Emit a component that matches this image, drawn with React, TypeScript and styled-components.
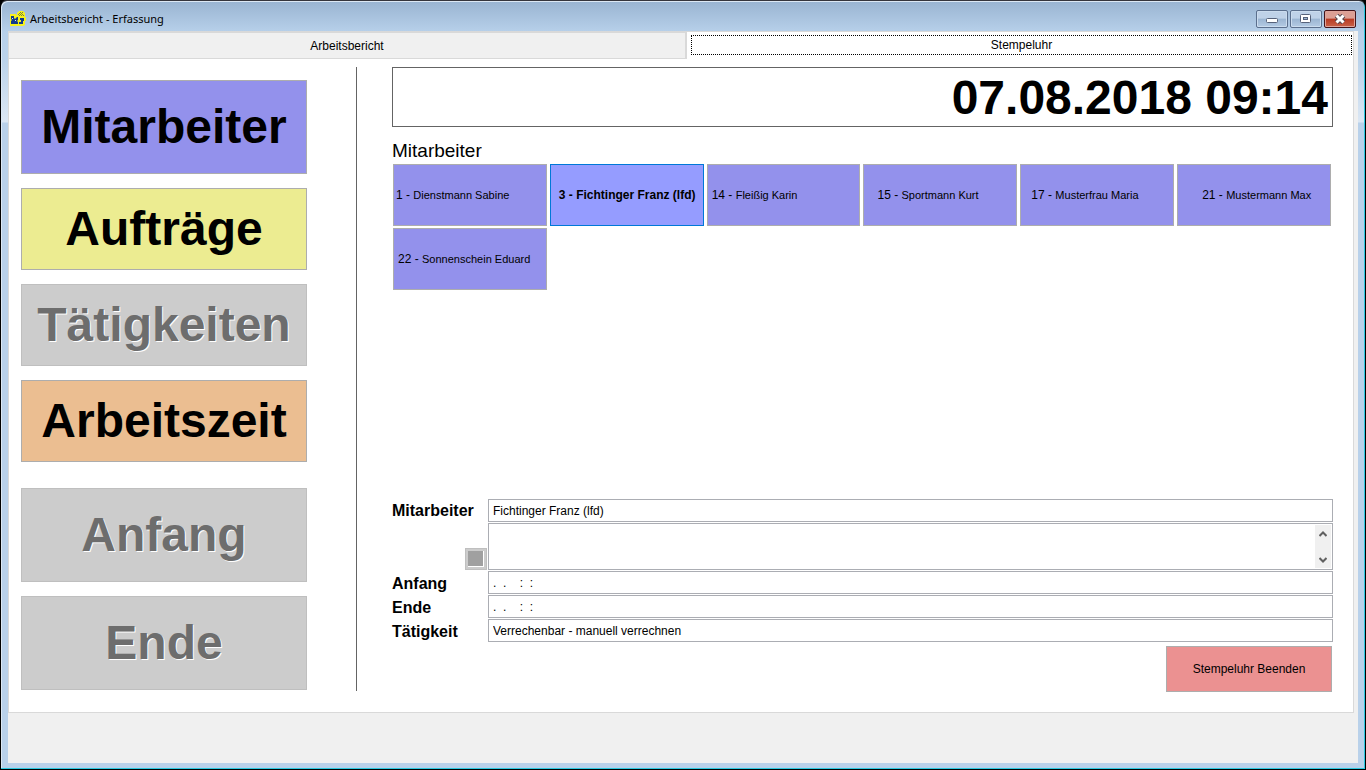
import React, { useState } from 'react';
import styled, { createGlobalStyle, css } from 'styled-components';

const GlobalStyle = createGlobalStyle`
  * { box-sizing: border-box; }
  body { margin: 0; background: #000; }
  #root { min-height: 100vh; display: flex; }
  body, button, input, textarea, label {
    font-family: "Liberation Sans", Arial, sans-serif;
    font-size: 12px;
    color: #000;
  }
`;

const Frame = styled.div`
  flex: 1;
  min-width: 0;
  display: flex;
  flex-direction: column;
  padding: 0 6px 6px;
  background: linear-gradient(#99b4d1 0, #b7d0ea 31px, #bcd3ea 60px, #dbe7f4 121px, #b9d1ea 122px);
  border: 1px solid #000;
  border-left-color: #000;
  border-top-color: #35353c;
  border-radius: 7px 7px 0 0;
  box-shadow: inset -1px -1px 0 #2cc8e0, inset 1px 1px 0 #dce8f4;
`;

const TitleBar = styled.header`
  height: 30px;
  display: flex;
  align-items: center;
  padding: 6px 3px 0 3px;
  gap: 4px;
`;

const Title = styled.h1`
  flex: 1;
  margin: 0;
  font: 400 11px/16px "Noto Sans", "Open Sans", sans-serif;
`;

const WindowButtons = styled.div`
  display: flex;
  gap: 2px;
`;

const WindowButton = styled.button<{ $close?: boolean }>`
  width: 32px;
  height: 18px;
  padding: 0;
  display: flex;
  align-items: center;
  justify-content: center;
  border: 1px solid ${p => (p.$close ? '#43141a' : '#5b6f8d')};
  border-radius: 2px;
  box-shadow: inset 0 0 0 1px ${p => (p.$close ? '#dfa49b' : '#cbdcee')};
  background: ${p =>
    p.$close
      ? 'linear-gradient(#dc9f94 0 45%, #b83a22 50%, #c9634a)'
      : 'linear-gradient(#bfd2e8 0 45%, #9bb5d2 50%, #b4cbe4)'};
`;

const Client = styled.main`
  flex: 1;
  display: flex;
  flex-direction: column;
  margin-left: 1px;
  margin-right: 1px;
  padding-right: 4px;
  background: #f0f0f0;
`;

const TabList = styled.div`
  height: 28px;
  display: flex;
  background: #fff;
  border-top: 1px solid #d9d9d9;
  border-right: 1px solid #d9d9d9;
`;

const Tab = styled.button<{ $active?: boolean }>`
  flex: 1 1 0;
  min-width: 0;
  margin: 0;
  border: 0;
  line-height: 14px;
  ${p =>
    p.$active
      ? css`
          margin: 3px 1px 4px 4px;
          padding: 0;
          background: #fff;
          outline: 1px dotted #000;
          outline-offset: -1px;
        `
      : css`
          padding: 1px 0 0;
          flex-basis: 18px;
          background: #f0f0f0;
          border: 1px solid #d9d9d9;
          border-right-width: 2px;
        `}
`;

const Page = styled.section`
  display: flex;
  padding: 8px 20px 20px 12px;
  background: #fff;
  border: 1px solid #d9d9d9;
  border-top: 0;
`;

const Sidebar = styled.nav`
  width: 286px;
  flex: none;
  display: flex;
  flex-direction: column;
  gap: 14px;
  padding: 13px 0 2px;
`;

const ModeButton = styled.button<{ $color?: string; $tall?: boolean; $apart?: boolean }>`
  height: ${p => (p.$tall ? 94 : 82)}px;
  margin-top: ${p => (p.$apart ? 12 : 0)}px;
  padding: 0;
  border: 1px solid #adadad;
  background: ${p => p.$color};
  font-size: 48px;
  line-height: 56px;
  font-weight: 700;
  &:disabled {
    background: #ccc;
    border-color: #bfbfbf;
    color: #6d6d6d;
    text-shadow: 1px 1px 0 #fff;
  }
`;

const Divider = styled.div`
  width: 1px;
  flex: none;
  margin: 0 35px 1px 49px;
  background: #646464;
`;

const Content = styled.div`
  flex: 1;
  min-width: 0;
  display: flex;
  flex-direction: column;
`;

const Clock = styled.time`
  height: 60px;
  padding-right: 4px;
  border: 1px solid #646464;
  font-size: 48px;
  line-height: 60px;
  font-weight: 700;
  text-align: right;
`;

const Heading = styled.h2`
  margin: 13px 0 2px;
  font-size: 19px;
  line-height: 22px;
  font-weight: 400;
`;

const Tiles = styled.div`
  flex: 1;
  display: grid;
  grid-template-columns: repeat(6, 1fr);
  grid-auto-rows: 62px;
  gap: 2px 3px;
  align-content: start;
  padding: 0 2px 0 1px;
`;

const Tile = styled.button<{ $selected: boolean; $indent: number }>`
  padding: 0 0 1px ${p => p.$indent}px;
  border: 1px solid ${p => (p.$selected ? '#0078d7' : '#adadad')};
  background: ${p => (p.$selected ? '#959cff' : '#9391ec')};
  font-weight: ${p => (p.$selected ? 700 : 400)};
  text-align: left;
  white-space: nowrap;
`;

const TileName = styled.span<{ $selected: boolean }>`
  font-size: ${p => (p.$selected ? 12 : 11)}px;
`;

const Form = styled.form`
  display: grid;
  grid-template-columns: 96px 1fr;
  row-gap: 1px;
`;

const FieldLabel = styled.label<{ $low?: boolean }>`
  height: 23px;
  font-size: 16px;
  line-height: ${p => (p.$low ? 26 : 23)}px;
  font-weight: 700;
`;

const Field = styled.input`
  width: 100%;
  height: 23px;
  padding: 0 4px;
  border: 1px solid #abadb3;
  background: #fff;
  white-space: pre;
`;

const MarkCell = styled.div`
  display: flex;
  align-items: flex-end;
  justify-content: flex-end;
  padding-right: 1px;
`;

const MarkButton = styled.button`
  width: 22px;
  height: 22px;
  padding: 0;
  border: 3px solid #ccc;
  outline: 1px solid #bfbfbf;
  outline-offset: -1px;
  background: #a0a0a0;
  box-shadow: inset -1px -1px 0 #fff;
`;

const NoteBox = styled.div`
  height: 47px;
  display: flex;
  padding: 1px;
  border: 1px solid #abadb3;
`;

const Note = styled.textarea`
  flex: 1;
  border: 0;
  resize: none;
  padding: 3px;
  overflow: hidden;
`;

const Scroller = styled.div`
  width: 16px;
  display: flex;
  flex-direction: column;
  justify-content: space-between;
  background: #f0f0f0;
`;

const ScrollButton = styled.button`
  height: 17px;
  padding: 0;
  border: 0;
  background: none;
  display: flex;
  align-items: center;
  justify-content: center;
`;

const QuitButton = styled.button`
  align-self: flex-end;
  width: 166px;
  height: 46px;
  margin: 4px 1px 0 0;
  border: 1px solid #adadad;
  background: #eb9191;
`;

const AppIcon = () => (
  <svg width="16" height="16" viewBox="0 0 16 16" aria-hidden="true">
    <path d="M0 3h6v1h1V2l2-2h4l2 2v4h1v4h-1v4l-2 1H0z" fill="#f6f21c" />
    <path d="M1 5h3v2l1 1 2-2h1v3l-1 1 1 1v2H1v-3l1-1-1-1z" fill="#123a8c" />
    <path d="M10 7h4v3h-1v3H9v-2h2V9h-1z" fill="#123a8c" />
    <path d="M2 7h1v1H2zM5 9h1v1H5z" fill="#dfe8f2" />
    <path d="M8 3h1v1H8zM10 1h1v1h-1zM12 1h1v1h-1zM9 2h1v1H9zM11 2h1v1h-1zM10 3h1v1h-1zM12 3h1v1h-1zM9 4h1v1H9zM11 4h1v1h-1zM13 4h1v1h-1z" fill="#77803c" />
  </svg>
);

const Chevron = ({ down }: { down?: boolean }) => (
  <svg width="8" height="6" viewBox="0 0 8 6" aria-hidden="true">
    <path d={down ? 'M0.5 1L4 4.5L7.5 1' : 'M0.5 5L4 1.5L7.5 5'} fill="none" stroke="#606060" strokeWidth="2" />
  </svg>
);

const employees = [
  { no: 1, name: 'Dienstmann Sabine', indent: 2 },
  { no: 3, name: 'Fichtinger Franz (lfd)', indent: 8 },
  { no: 14, name: 'Fleißig Karin', indent: 4 },
  { no: 15, name: 'Sportmann Kurt', indent: 13 },
  { no: 17, name: 'Musterfrau Maria', indent: 10 },
  { no: 21, name: 'Mustermann Max', indent: 24 },
  { no: 22, name: 'Sonnenschein Eduard', indent: 4 },
];

export default function App() {
  const [selected, setSelected] = useState(3);
  return (
    <>
      <GlobalStyle />
      <Frame>
        <TitleBar>
          <AppIcon />
          <Title>Arbeitsbericht - Erfassung</Title>
          <WindowButtons>
            <WindowButton aria-label="Minimieren">
              <svg width="12" height="12" viewBox="0 0 12 12">
                <rect x="0.5" y="5.5" width="11" height="4" rx="1" fill="#fff" stroke="#56627a" />
              </svg>
            </WindowButton>
            <WindowButton aria-label="Maximieren">
              <svg width="12" height="12" viewBox="0 0 12 12">
                <rect x="0.5" y="1.5" width="10" height="8" rx="1" fill="#fff" stroke="#56627a" />
                <rect x="3.5" y="4.5" width="4" height="2" fill="#9bb5d2" stroke="#56627a" />
              </svg>
            </WindowButton>
            <WindowButton $close aria-label="Schließen">
              <svg width="12" height="10" viewBox="0 0 12 10">
                <path d="M2.5 1.5L9.5 8.5M9.5 1.5L2.5 8.5" stroke="#56484f" strokeWidth="5" />
                <path d="M2.5 1.5L9.5 8.5M9.5 1.5L2.5 8.5" stroke="#fff" strokeWidth="3" />
              </svg>
            </WindowButton>
          </WindowButtons>
        </TitleBar>
        <Client>
          <TabList role="tablist">
            <Tab role="tab" aria-selected={false}>Arbeitsbericht</Tab>
            <Tab role="tab" aria-selected $active>Stempeluhr</Tab>
          </TabList>
          <Page>
            <Sidebar>
              <ModeButton $tall $color="#9391ec">Mitarbeiter</ModeButton>
              <ModeButton $color="#ecec91">Aufträge</ModeButton>
              <ModeButton disabled>Tätigkeiten</ModeButton>
              <ModeButton $color="#ebbe91">Arbeitszeit</ModeButton>
              <ModeButton $tall $apart disabled>Anfang</ModeButton>
              <ModeButton $tall disabled>Ende</ModeButton>
            </Sidebar>
            <Divider />
            <Content>
              <Clock dateTime="2018-08-07T09:14">07.08.2018 09:14</Clock>
              <Heading>Mitarbeiter</Heading>
              <Tiles>
                {employees.map(e => (
                  <Tile
                    key={e.no}
                    $selected={e.no === selected}
                    $indent={e.indent}
                    onClick={() => setSelected(e.no)}
                  >
                    {e.no} - <TileName $selected={e.no === selected}>{e.name}</TileName>
                  </Tile>
                ))}
              </Tiles>
              <Form>
                <FieldLabel htmlFor="employee">Mitarbeiter</FieldLabel>
                <Field id="employee" defaultValue="Fichtinger Franz (lfd)" />
                <MarkCell>
                  <MarkButton type="button" aria-label="Bemerkung" />
                </MarkCell>
                <NoteBox>
                  <Note aria-label="Bemerkung" />
                  <Scroller>
                    <ScrollButton type="button" aria-label="Nach oben"><Chevron /></ScrollButton>
                    <ScrollButton type="button" aria-label="Nach unten"><Chevron down /></ScrollButton>
                  </Scroller>
                </NoteBox>
                <FieldLabel $low htmlFor="start">Anfang</FieldLabel>
                <Field id="start" defaultValue=".  .    :  :" />
                <FieldLabel $low htmlFor="end">Ende</FieldLabel>
                <Field id="end" defaultValue=".  .    :  :" />
                <FieldLabel $low htmlFor="activity">Tätigkeit</FieldLabel>
                <Field id="activity" defaultValue="Verrechenbar - manuell verrechnen" />
              </Form>
              <QuitButton>Stempeluhr Beenden</QuitButton>
            </Content>
          </Page>
        </Client>
      </Frame>
    </>
  );
}
